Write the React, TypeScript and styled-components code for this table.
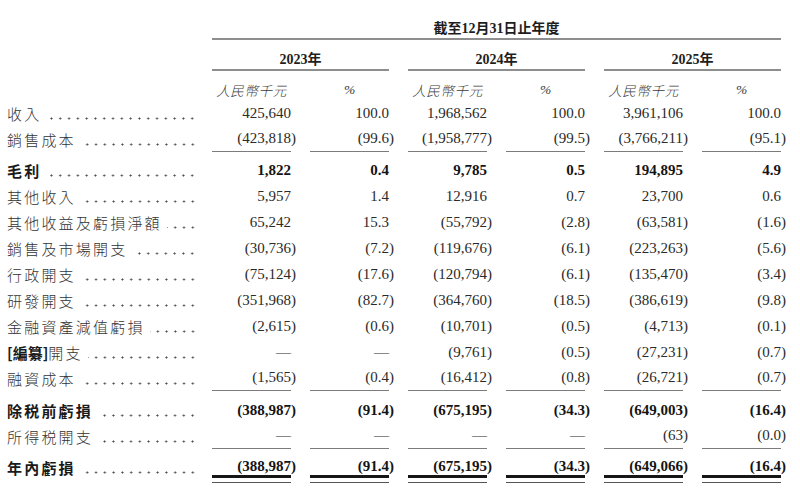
import React from "react";
import styled, { createGlobalStyle, css } from "styled-components";

const GlobalStyle = createGlobalStyle`
  html, body {
    margin: 0;
    padding: 0;
    background: #ffffff;
  }
  body {
    width: 800px;
    height: 499px;
    overflow: hidden;
    font-family: "Liberation Serif", "Noto Sans CJK TC", serif;
    color: #262626;
  }
`;

const columns = css`
  display: grid;
  grid-template-columns: 193px repeat(6, 79px);
  column-gap: 19px;
`;

const Statement = styled.div`
  width: 800px;
  padding-top: 16px;
`;

const HeaderRow = styled.div`
  ${columns};
`;

const TitleCell = styled.div`
  grid-column: 2 / 8;
  height: 24px;
  box-sizing: border-box;
  display: flex;
  align-items: center;
  justify-content: center;
  border-bottom: 2px solid #8e8e8e;
  font-size: 14px;
  font-weight: 700;
  color: #1e1e1e;
`;

const YearCell = styled.div`
  grid-column: span 2;
  height: 31px;
  box-sizing: border-box;
  padding-top: 6px;
  display: flex;
  align-items: center;
  justify-content: center;
  border-bottom: 2px solid #8e8e8e;
  font-size: 14px;
  font-weight: 700;
  color: #1e1e1e;
`;

const UnitCell = styled.div<{ $latin?: boolean }>`
  height: 29px;
  box-sizing: border-box;
  padding-top: 8px;
  display: flex;
  align-items: center;
  justify-content: center;
  font-family: ${(p) =>
    p.$latin ? `"Liberation Serif", serif` : `"Noto Sans CJK TC", sans-serif`};
  font-size: 13.5px;
  font-weight: 300;
  font-style: italic;
  letter-spacing: ${(p) => (p.$latin ? "0" : "0.6px")};
  color: #3c3c3c;
`;

const Row = styled.div<{ $gap?: number; $total?: boolean }>`
  ${columns};
  height: ${(p) => (p.$total ? 29 : 26)}px;
  margin-top: ${(p) => p.$gap ?? 0}px;
`;

const Label = styled.div<{ $bold?: boolean; $total?: boolean }>`
  align-self: center;
  display: flex;
  align-items: baseline;
  padding-left: 7px;
  margin-bottom: ${(p) => (p.$total ? 3 : 0)}px;
  font-family: "Noto Sans CJK TC", sans-serif;
  font-size: 15px;
  font-weight: ${(p) => (p.$bold ? 700 : 300)};
  letter-spacing: 2.2px;
  color: ${(p) => (p.$bold ? "#1a1a1a" : "#333333")};
  white-space: nowrap;
`;

const Bracketed = styled.span`
  font-weight: 700;
  letter-spacing: 0;
  color: #1a1a1a;
`;

const Leader = styled.span`
  flex: 1;
  height: 3px;
  margin-left: 5px;
  margin-right: -4px;
  background-image: radial-gradient(
    circle at center,
    #4a4a4a 0 0.8px,
    transparent 1.3px
  );
  background-size: 8.8px 3px;
  background-repeat: repeat-x;
  background-position: right center;
`;

const Value = styled.div<{ $bold?: boolean; $rule?: boolean; $total?: boolean }>`
  display: flex;
  align-items: center;
  justify-content: flex-end;
  box-sizing: border-box;
  font-family: "Liberation Serif", serif;
  font-size: 15px;
  font-weight: ${(p) => (p.$bold ? 700 : 400)};
  color: ${(p) => (p.$bold ? "#141414" : "#2a2a2a")};
  white-space: nowrap;
  ${(p) =>
    p.$rule &&
    css`
      border-bottom: 1px solid #7c7c7c;
    `}
  ${(p) =>
    p.$total &&
    css`
      padding: 3px 0 7px;
      background:
        linear-gradient(#161616, #161616) left bottom 5px / 100% 3px no-repeat,
        linear-gradient(#555555, #555555) left bottom / 100% 1px no-repeat;
    `}
`;

const Paren = styled.span`
  margin-right: -5px;
`;

type Line = {
  label: string;
  values: string[];
  bold?: boolean;
  rule?: boolean;
  gap?: number;
  total?: boolean;
  redacted?: boolean;
};

const lines: Line[] = [
  {
    label: "收入",
    values: ["425,640", "100.0", "1,968,562", "100.0", "3,961,106", "100.0"],
  },
  {
    label: "銷售成本",
    values: ["(423,818)", "(99.6)", "(1,958,777)", "(99.5)", "(3,766,211)", "(95.1)"],
    rule: true,
  },
  {
    label: "毛利",
    values: ["1,822", "0.4", "9,785", "0.5", "194,895", "4.9"],
    bold: true,
    gap: 5,
  },
  {
    label: "其他收入",
    values: ["5,957", "1.4", "12,916", "0.7", "23,700", "0.6"],
  },
  {
    label: "其他收益及虧損淨額",
    values: ["65,242", "15.3", "(55,792)", "(2.8)", "(63,581)", "(1.6)"],
  },
  {
    label: "銷售及市場開支",
    values: ["(30,736)", "(7.2)", "(119,676)", "(6.1)", "(223,263)", "(5.6)"],
  },
  {
    label: "行政開支",
    values: ["(75,124)", "(17.6)", "(120,794)", "(6.1)", "(135,470)", "(3.4)"],
  },
  {
    label: "研發開支",
    values: ["(351,968)", "(82.7)", "(364,760)", "(18.5)", "(386,619)", "(9.8)"],
  },
  {
    label: "金融資產減值虧損",
    values: ["(2,615)", "(0.6)", "(10,701)", "(0.5)", "(4,713)", "(0.1)"],
  },
  {
    label: "開支",
    values: ["—", "—", "(9,761)", "(0.5)", "(27,231)", "(0.7)"],
    redacted: true,
  },
  {
    label: "融資成本",
    values: ["(1,565)", "(0.4)", "(16,412)", "(0.8)", "(26,721)", "(0.7)"],
    rule: true,
  },
  {
    label: "除税前虧損",
    values: ["(388,987)", "(91.4)", "(675,195)", "(34.3)", "(649,003)", "(16.4)"],
    bold: true,
    gap: 6,
  },
  {
    label: "所得税開支",
    values: ["—", "—", "—", "—", "(63)", "(0.0)"],
    rule: true,
  },
  {
    label: "年內虧損",
    values: ["(388,987)", "(91.4)", "(675,195)", "(34.3)", "(649,066)", "(16.4)"],
    bold: true,
    gap: 5,
    total: true,
  },
];

const years = ["2023年", "2024年", "2025年"];

const Amount = ({ text }: { text: string }) =>
  text.startsWith("(") ? (
    <>
      {text.slice(0, -1)}
      <Paren>)</Paren>
    </>
  ) : (
    <>{text}</>
  );

export default function App() {
  return (
    <>
      <GlobalStyle />
      <Statement>
        <HeaderRow>
          <TitleCell>截至12月31日止年度</TitleCell>
        </HeaderRow>
        <HeaderRow>
          <div />
          {years.map((y) => (
            <YearCell key={y}>{y}</YearCell>
          ))}
        </HeaderRow>
        <HeaderRow>
          <div />
          {years.map((y) => (
            <React.Fragment key={y}>
              <UnitCell>人民幣千元</UnitCell>
              <UnitCell $latin>%</UnitCell>
            </React.Fragment>
          ))}
        </HeaderRow>

        {lines.map((line) => (
          <Row key={line.label} $gap={line.gap} $total={line.total}>
            <Label $bold={line.bold} $total={line.total}>
              {line.redacted && <Bracketed>[編纂]</Bracketed>}
              {line.label}
              <Leader />
            </Label>
            {line.values.map((v, i) => (
              <Value
                key={i}
                $bold={line.bold}
                $rule={line.rule}
                $total={line.total}
              >
                <Amount text={v} />
              </Value>
            ))}
          </Row>
        ))}
      </Statement>
    </>
  );
}
